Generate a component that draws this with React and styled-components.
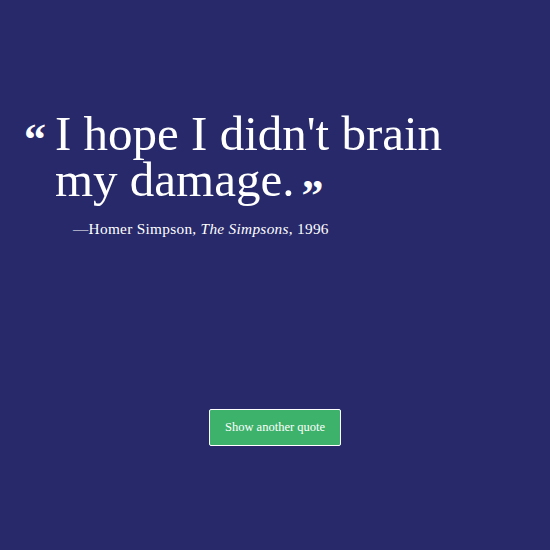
import React from 'react';
import styled, { createGlobalStyle } from 'styled-components';

const GlobalStyle = createGlobalStyle`
  html, body {
    margin: 0;
    padding: 0;
    background: #27296a;
  }
`;

const Page = styled.div`
  width: 550px;
  height: 550px;
  background: #27296a;
  color: #ffffff;
  font-family: 'Liberation Serif', 'DejaVu Serif', serif;
  display: flex;
  flex-direction: column;
  box-sizing: border-box;
  padding: 111px 0 0 24px;
`;

const QuoteRow = styled.div`
  display: flex;
  align-items: flex-start;
`;

const OpenMark = styled.span`
  font-size: 44px;
  font-weight: bold;
  line-height: 1;
  width: 31px;
  margin-top: 7px;
`;

const QuoteText = styled.blockquote`
  margin: 0;
  font-size: 49px;
  line-height: 46px;
  width: 430px;
`;

const CloseMark = styled.span`
  font-size: 44px;
  font-weight: bold;
  line-height: 0;
  margin-left: 7px;
  vertical-align: -14px;
`;

const Cite = styled.p`
  margin: 17px 0 0 49px;
  font-size: 15.3px;
  letter-spacing: 0.3px;

  em {
    font-style: italic;
  }
`;

const ButtonRow = styled.div`
  display: flex;
  justify-content: center;
  margin: 171px 0 0 -24px;
`;

const Button = styled.button`
  background: #3cb26a;
  color: #ffffff;
  border: 1px solid #ffffff;
  border-radius: 2px;
  width: 132px;
  height: 37px;
  font-family: 'Liberation Serif', 'DejaVu Serif', serif;
  font-size: 12.5px;
  cursor: pointer;
`;

export default function App() {
  return (
    <>
      <GlobalStyle />
      <Page>
        <QuoteRow>
          <OpenMark>“</OpenMark>
          <QuoteText>
            I hope I didn't brain my damage.<CloseMark>”</CloseMark>
          </QuoteText>
        </QuoteRow>
        <Cite>
          —Homer Simpson, <em>The Simpsons</em>, 1996
        </Cite>
        <ButtonRow>
          <Button>Show another quote</Button>
        </ButtonRow>
      </Page>
    </>
  );
}
